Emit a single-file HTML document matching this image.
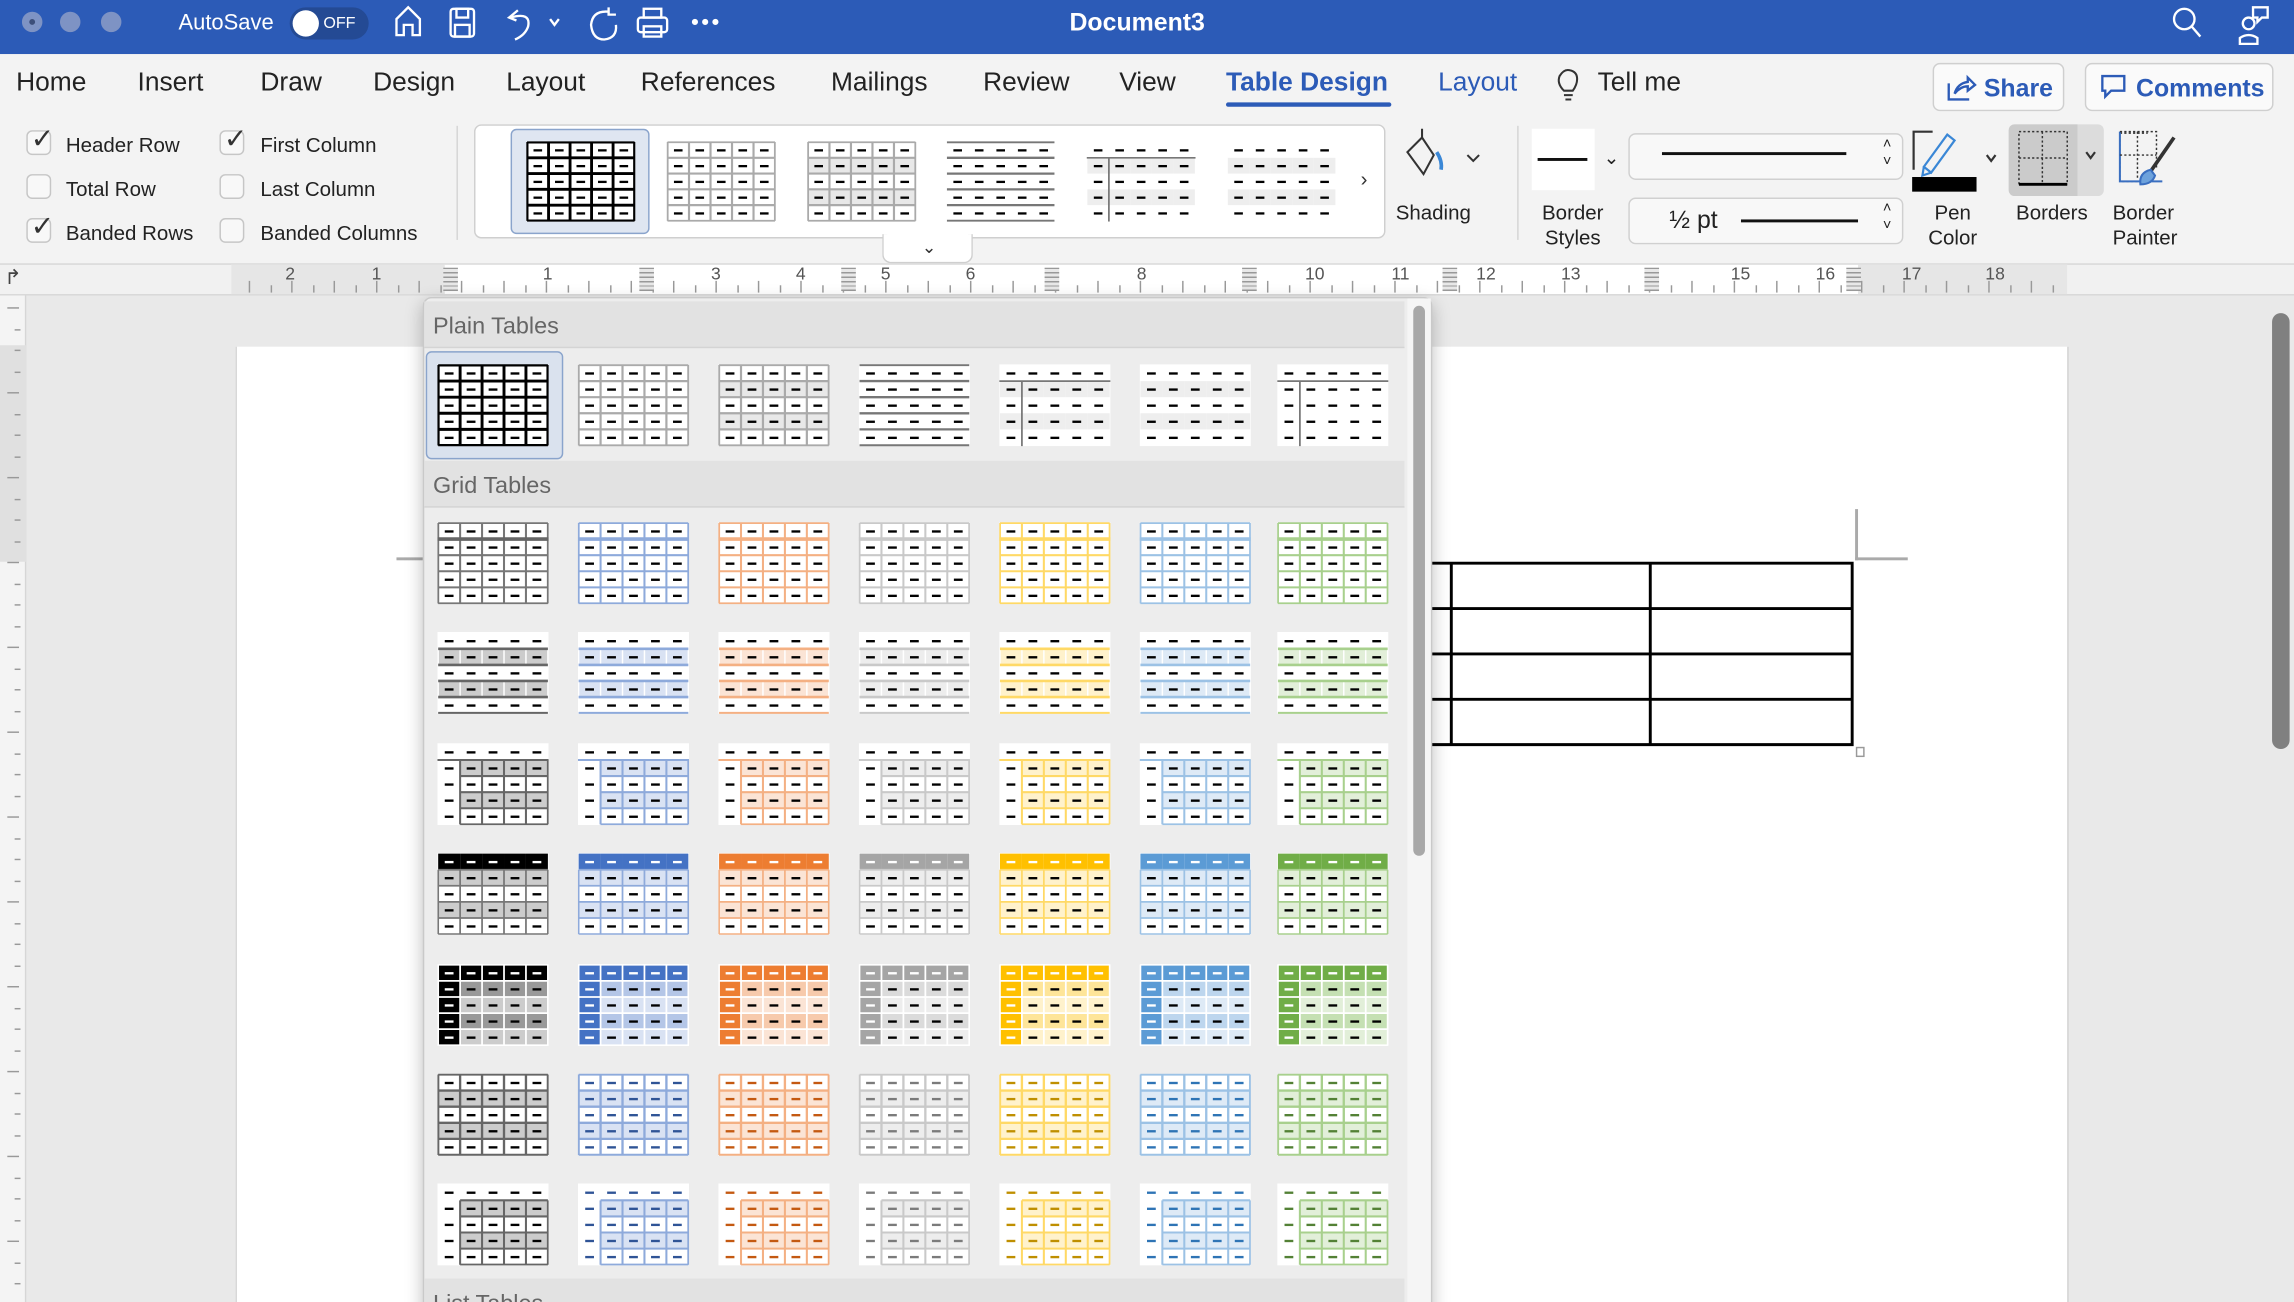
<!DOCTYPE html>
<html><head><meta charset="utf-8">
<style>
*{margin:0;padding:0;box-sizing:border-box}
html,body{width:2294px;height:1302px;overflow:hidden;background:#e8e8e8}
#root{position:absolute;left:0;top:0;width:1568px;height:890px;transform:scale(1.46301,1.46292);transform-origin:0 0;font-family:"Liberation Sans",sans-serif;color:#222;overflow:hidden}
.a{position:absolute}
.title{left:0;top:0;width:1568px;height:37px;background:#2c5bb7}
.tab{position:absolute;top:46px;font-size:18px;color:#222}
.lbl{position:absolute;font-size:14px;color:#222}
.cb{position:absolute;width:17px;height:17px;border:1px solid #c6c6c6;border-radius:4px;background:#f8f8f8}
.ck{position:absolute;left:2px;top:-6px;font-size:19px;color:#333}
.th{position:absolute}
.hdr{position:absolute;left:1px;width:670px;height:32px;background:#e2e2e2;border-bottom:1px solid #d4d4d4;font-size:16px;color:#666;padding:9px 0 0 6px}
.btn{position:absolute;border:1px solid #cfcfcf;border-radius:5px;background:#fafafa;font-size:17px;color:#2c5bb7;font-weight:bold}
</style></head><body><div id="root">

<!-- title bar -->
<div class="a title"></div>
<div class="a" style="left:15px;top:8px;width:14px;height:14px;border-radius:7px;background:#7e93c4"></div>
<div class="a" style="left:20px;top:13px;width:4px;height:4px;border-radius:2px;background:#3d4f7a"></div>
<div class="a" style="left:41px;top:8px;width:14px;height:14px;border-radius:7px;background:#7e93c4"></div>
<div class="a" style="left:69px;top:8px;width:14px;height:14px;border-radius:7px;background:#7e93c4"></div>
<div class="a" style="left:122px;top:7px;font-size:15px;color:#fff;">AutoSave</div>
<div class="a" style="left:198px;top:5px;width:54px;height:22px;border-radius:11px;background:#244a94"></div>
<div class="a" style="left:200px;top:7px;width:18px;height:18px;border-radius:9px;background:#fff"></div>
<div class="a" style="left:221px;top:10px;font-size:11px;color:#fff">OFF</div>
<svg class="a" style="left:260px;top:0" width="250" height="37" fill="none" stroke="#fff" stroke-width="1.6">
<path d="M11 24V13L19 5L27 13V24H22V17H16V24Z"/>
<rect x="48" y="6" width="16" height="19" rx="2"/><rect x="52" y="6" width="8" height="6"/><rect x="51" y="17" width="10" height="8"/>
<path d="M94 7L88 12L93 14M89 12Q103 8 101 18Q99 24 92 27"/><path d="M116 13L119 17L122 13"/>
<path d="M156 8Q145 7 144 17Q145 27 153 27Q162 26 161 17M156 5V10H161"/>
<rect x="176" y="12" width="20" height="10" rx="2"/><rect x="180" y="6" width="12" height="6"/><rect x="180" y="18" width="12" height="7"/>
<circle cx="215" cy="15" r="1.3" fill="#fff"/><circle cx="222" cy="15" r="1.3" fill="#fff"/><circle cx="229" cy="15" r="1.3" fill="#fff"/>
</svg>
<div class="a" style="left:731px;top:6px;font-size:17px;font-weight:bold;color:#fff">Document3</div>
<svg class="a" style="left:1480px;top:0" width="88" height="37" fill="none" stroke="#fff" stroke-width="1.6">
<circle cx="13" cy="13" r="7"/><path d="M18 18L24 25"/>
<circle cx="57" cy="16" r="4"/><path d="M51 30V26Q57 22 63 26V30Z"/><path d="M60 5H70V12H66L63 15V12H60Z"/>
</svg>

<!-- tab row -->
<div class="a" style="left:0;top:37px;width:1568px;height:143px;background:#f3f3f3"></div>
<div class="tab" style="left:11px">Home</div>
<div class="tab" style="left:94px">Insert</div>
<div class="tab" style="left:178px">Draw</div>
<div class="tab" style="left:255px">Design</div>
<div class="tab" style="left:346px">Layout</div>
<div class="tab" style="left:438px">References</div>
<div class="tab" style="left:568px">Mailings</div>
<div class="tab" style="left:672px">Review</div>
<div class="tab" style="left:765px">View</div>
<div class="tab" style="left:838px;color:#2c5bb7;font-weight:bold">Table Design</div>
<div class="a" style="left:838px;top:70px;width:113px;height:3px;background:#2c5bb7;border-radius:2px"></div>
<div class="tab" style="left:983px;color:#2c5bb7">Layout</div>
<svg class="a" style="left:1062px;top:46px" width="20" height="24" fill="none" stroke="#333" stroke-width="1.4"><path d="M7 16Q2 11 4 6Q7 1 11 2Q16 3 16 8Q16 12 13 16ZM7 19H13M8 22H12"/></svg>
<div class="tab" style="left:1092px">Tell me</div>
<div class="btn" style="left:1321px;top:43px;width:90px;height:33px;padding:7px 0 0 34px">Share</div>
<svg class="a" style="left:1330px;top:50px" width="22" height="20" fill="none" stroke="#2c5bb7" stroke-width="1.6"><path d="M2 7V18H16M6 14Q8 7 15 6V3L20 8L15 12V9Q10 9 6 14Z"/></svg>
<div class="btn" style="left:1425px;top:43px;width:129px;height:33px;padding:7px 0 0 34px">Comments</div>
<svg class="a" style="left:1435px;top:50px" width="20" height="20" fill="none" stroke="#2c5bb7" stroke-width="1.6"><path d="M2 2H17V12H8L4 16V12H2Z"/></svg>

<!-- checkboxes -->
<div class="cb" style="left:18px;top:89px"><span class="ck">✓</span></div><div class="lbl" style="left:45px;top:91px">Header Row</div>
<div class="cb" style="left:18px;top:119px"></div><div class="lbl" style="left:45px;top:121px">Total Row</div>
<div class="cb" style="left:18px;top:149px"><span class="ck">✓</span></div><div class="lbl" style="left:45px;top:151px">Banded Rows</div>
<div class="cb" style="left:150px;top:89px"><span class="ck">✓</span></div><div class="lbl" style="left:178px;top:91px">First Column</div>
<div class="cb" style="left:150px;top:119px"></div><div class="lbl" style="left:178px;top:121px">Last Column</div>
<div class="cb" style="left:150px;top:149px"></div><div class="lbl" style="left:178px;top:151px">Banded Columns</div>
<div class="a" style="left:312px;top:86px;width:1px;height:78px;background:#d5d5d5"></div>

<!-- gallery -->
<div class="a" style="left:324px;top:85px;width:623px;height:78px;background:#fff;border:1px solid #cfcfcf;border-radius:5px"></div>
<div class="a" style="left:603px;top:160px;width:62px;height:20px;background:#fff;border:1px solid #cfcfcf;border-top:none;border-radius:0 0 6px 6px"></div>
<div class="a" style="left:630px;top:162px;font-size:12px;color:#333">⌄</div>
<div class="a" style="left:349px;top:88px;width:95px;height:72px;background:#dfe6f1;border:1px solid #8aa4cc;border-radius:4px"></div>
<div id="gal"></div>
<div class="a" style="left:930px;top:114px;font-size:14px;color:#333">›</div>
<svg class="a" style="left:958px;top:86px" width="60" height="50" fill="none" stroke="#333" stroke-width="1.4"><path d="M4 18L14 8L22 20L15 33Z"/><path d="M14 8V2" /><path d="M24 18Q28 24 27 30" stroke="#3a87d6" stroke-width="2.5"/><path d="M45 20L49 24L53 20" /></svg>
<div class="lbl" style="left:954px;top:137px">Shading</div>
<div class="a" style="left:1037px;top:86px;width:1px;height:78px;background:#d5d5d5"></div>
<div class="a" style="left:1047px;top:88px;width:43px;height:42px;background:#fff"></div>
<div class="a" style="left:1051px;top:108px;width:34px;height:2px;background:#111"></div>
<div class="a" style="left:1096px;top:100px;font-size:13px">⌄</div>
<div class="lbl" style="left:1054px;top:137px;text-align:center;line-height:17px">Border<br>Styles</div>
<div class="a" style="left:1113px;top:91px;width:188px;height:32px;border:1px solid #d0d0d0;border-radius:5px;background:#f8f8f8"></div>
<div class="a" style="left:1136px;top:104px;width:126px;height:2px;background:#111"></div>
<div class="a" style="left:1113px;top:135px;width:188px;height:32px;border:1px solid #d0d0d0;border-radius:5px;background:#f8f8f8"></div>
<div class="a" style="left:1141px;top:141px;font-size:17px">½ pt</div>
<div class="a" style="left:1190px;top:150px;width:80px;height:2px;background:#111"></div>
<div class="a" style="left:1287px;top:93px;font-size:10px;line-height:12px">˄<br>˅</div>
<div class="a" style="left:1287px;top:137px;font-size:10px;line-height:12px">˄<br>˅</div>
<svg class="a" style="left:1305px;top:86px" width="70" height="46" fill="none" stroke-width="1.5"><path d="M3 30V4H16" stroke="#333"/><path d="M10 28L26 6L31 10L15 32Z" stroke="#3a87d6"/><path d="M10 28L9 34L15 32" stroke="#3a87d6"/><path d="M53 20L56 24L59 20" stroke="#333"/></svg>
<div class="a" style="left:1307px;top:121px;width:44px;height:10px;background:#000"></div>
<div class="lbl" style="left:1318px;top:137px;text-align:center;line-height:17px">Pen<br>Color</div>
<div class="a" style="left:1373px;top:85px;width:65px;height:49px;background:#dcdcdc;border-radius:4px"></div>
<div class="a" style="left:1373px;top:85px;width:47px;height:49px;background:#cbcbcb;border-radius:4px 0 0 4px"></div>
<svg class="a" style="left:1378px;top:88px" width="90" height="46" fill="none" stroke-width="1"><rect x="2" y="2" width="33" height="36" stroke="#333" stroke-dasharray="1.5 1.5"/><path d="M18 2V38M2 20H35" stroke="#333" stroke-dasharray="1.5 1.5"/><path d="M2 38H35" stroke="#000" stroke-width="2"/><path d="M48 16L51 20L54 16" stroke="#333" stroke-width="1.5"/><rect x="71" y="3" width="30" height="33" stroke="#333" stroke-dasharray="1.5 1.5"/></svg>
<div class="lbl" style="left:1378px;top:137px">Borders</div>
<svg class="a" style="left:1446px;top:88px" width="50" height="46" fill="none" stroke-width="1.4"><path d="M3 2V36H32" stroke="#3a6fc0"/><path d="M3 2H28V28M15 2V34M3 18H28" stroke="#333" stroke-dasharray="1.5 1.5" stroke-width="1"/><path d="M40 6L22 32" stroke="#333" stroke-width="2.5"/><path d="M24 28Q16 30 17 38Q25 38 27 32Z" fill="#6da2dc" stroke="#3a6fc0"/></svg>
<div class="lbl" style="left:1444px;top:137px;line-height:17px">Border<br>Painter</div>

<!-- ruler -->
<div class="a" style="left:0;top:180px;width:1568px;height:22px;background:#f1f1f1;border-top:1px solid #d8d8d8;border-bottom:1px solid #d8d8d8"></div>
<div class="a" style="left:158px;top:181px;width:1255px;height:20px;background:#fff"></div>
<div class="a" style="left:158px;top:181px;width:146px;height:20px;background:#e6e6e6"></div>
<div class="a" style="left:1270px;top:181px;width:143px;height:20px;background:#e6e6e6"></div>
<div id="ruler"></div>
<div class="a" style="left:3px;top:181px;font-size:14px;color:#444">↱</div>

<!-- document area -->
<div class="a" style="left:0;top:202px;width:1568px;height:688px;background:#e9e9e9"></div>
<div class="a" style="left:0;top:202px;width:18px;height:688px;background:#f4f4f4;border-right:1px solid #d6d6d6"></div>
<div class="a" style="left:0;top:236px;width:18px;height:148px;background:#e0e0e0"></div>
<div id="vr"></div>
<div class="a" style="left:161px;top:237px;width:1253px;height:653px;background:#fff;border-left:1px solid #d8d8d8;border-right:1px solid #d0d0d0"></div>
<div class="a" style="left:1268px;top:348px;width:2px;height:35px;background:#aaa"></div>
<div class="a" style="left:1268px;top:381px;width:36px;height:2px;background:#aaa"></div>
<div class="a" style="left:271px;top:381px;width:18px;height:2px;background:#aaa"></div>
<svg class="a" style="left:975px;top:383px" width="300" height="140"><g stroke="#000" stroke-width="2" fill="none"><path d="M0 2H291V126H0M0 33H291M0 64H291M0 95H291M17 2V126M153 2V126"/></g><rect x="294" y="128" width="5" height="6" fill="#fff" stroke="#999"/></svg>
<div class="a" style="left:1553px;top:214px;width:12px;height:298px;background:#808080;border-radius:6px"></div>

<!-- dropdown -->
<div class="a" style="left:289px;top:203px;width:690px;height:700px;background:#ededed;border:1px solid #c9c9c9;border-radius:6px;box-shadow:0 4px 12px rgba(0,0,0,.25)"></div>
<div class="a" style="left:962px;top:204px;width:16px;height:686px;background:#f5f5f5"></div>
<div class="a" style="left:966px;top:209px;width:8px;height:376px;background:#a8a8a8;border-radius:4px"></div>
<div class="hdr" style="left:290px;top:206px">Plain Tables</div>
<div class="hdr" style="left:290px;top:315px">Grid Tables</div>
<div class="hdr" style="left:290px;top:874px">List Tables</div>
<div class="a" style="left:291px;top:240px;width:94px;height:74px;background:#dae2ee;border:1px solid #8aa4cc;border-radius:4px"></div>
<div id="dd"></div>
</div>
<script>
var dark=['#000','#4472c4','#ed7d31','#a5a5a5','#ffc000','#5b9bd5','#70ad47'];
var med=['#6e6e6e','#8eaadb','#f4b083','#c9c9c9','#ffd966','#9cc2e5','#a8d08d'];
var lite=['#cccccc','#d9e2f3','#fbe4d5','#ededed','#fff2cc','#deeaf6','#e2efd9'];
var mid=['#999','#b4c6e7','#f7caac','#dbdbdb','#fee599','#bdd6ee','#c5e0b3'];
var txt=['#000','#2f5496','#c45911','#7b7b7b','#bf8f00','#2e74b5','#538135'];
var W=76,H=56,cw=15,ch=11,x0=0.5,y0=0.5;
function build(o){
 var s='<svg width="'+W+'" height="'+H+'" viewBox="0 0 '+W+' '+H+'" xmlns="http://www.w3.org/2000/svg"><rect width="'+W+'" height="'+H+'" fill="#fff"/>';
 for(var r=0;r<5;r++)for(var c=0;c<5;c++){var f=o.fill?o.fill(r,c):null;if(f)s+='<rect x="'+(x0+c*cw)+'" y="'+(y0+r*ch)+'" width="'+cw+'" height="'+ch+'" fill="'+f+'"/>';}
 (o.lines||[]).forEach(function(l){s+='<line x1="'+l[0]+'" y1="'+l[1]+'" x2="'+l[2]+'" y2="'+l[3]+'" stroke="'+l[4]+'" stroke-width="'+(l[5]||1)+'"/>';});
 for(var r=0;r<5;r++)for(var c=0;c<5;c++){var d=o.dash?o.dash(r,c):'#000';s+='<rect x="'+(x0+c*cw+4.5)+'" y="'+(y0+r*ch+5)+'" width="6" height="1.6" fill="'+d+'"/>';}
 return s+'</svg>';
}
function grid(col,w,opt){opt=opt||{};var L=[];var r0=opt.skipRow?1:0,c0=opt.skipCol?1:0;
 var xs=x0+c0*cw,ys=y0+r0*ch,xe=x0+5*cw,ye=y0+5*ch;
 if(!opt.noH)for(var r=r0;r<=5;r++)L.push([xs,y0+r*ch,xe,y0+r*ch,col,w]);
 if(!opt.noV)for(var c=c0;c<=5;c++)L.push([x0+c*cw,ys,x0+c*cw,ye,col,w]);
 return L;}
var plain=[
 {lines:grid('#000',2)},
 {lines:grid('#aaa',1.5)},
 {lines:grid('#aaa',1.5),fill:function(r){return r%2?'#e8e8e8':null}},
 {lines:grid('#777',1.6,{noV:1})},
 {lines:[[0,11.5,76,11.5,'#777',1.2],[15.5,11.5,15.5,56,'#777',1.2]],fill:function(r){return r%2?'#eee':null}},
 {fill:function(r){return r%2?'#eee':null}},
 {lines:[[0,11.5,76,11.5,'#777',1.2],[15.5,11.5,15.5,56,'#777',1.2]]}
];
function gridStyles(i){
 var m=med[i],dk=dark[i],lt=lite[i],md=mid[i];
 var A={lines:grid(i==0?'#777':m,1.4).concat([[0,11.5,76,11.5,i==0?'#666':m,2.5]])};
 var B={fill:function(r){return (r==1||r==3)?lt:null},lines:grid('#fff',1,{noH:1,skipRow:1}).concat(grid(i==0?'#666':m,1.8,{noV:1,skipRow:1}))};
 var C={fill:function(r,c){return (r==1||r==3)&&c>0?lt:null},lines:grid(i==0?'#666':m,1.4,{skipRow:1,skipCol:1}).concat([[0,11.5,76,11.5,i==0?'#666':m,1.4]])};
 var D={fill:function(r){return r==0?dk:(r%2?lt:null)},lines:grid(i==0?'#777':m,1.2,{skipRow:1}),dash:function(r){return r==0?'#fff':'#000'}};
 var E={fill:function(r,c){return (r==0||c==0)?dk:(r%2?md:lt)},lines:grid('#fff',1.2),dash:function(r,c){return (r==0||c==0)?'#fff':'#000'}};
 var F={fill:function(r){return (r==1||r==3)?lt:null},lines:grid(i==0?'#666':m,1.6),dash:function(){return txt[i]}};
 var G={fill:function(r,c){return (r==1||r==3)&&c>0?lt:null},lines:grid(i==0?'#666':m,1.4,{skipRow:1,skipCol:1}),dash:function(){return txt[i]}};
 return [A,B,C,D,E,F,G];
}
var dd='';var xs=[299,395,491,587,683,779,873];
for(var k=0;k<7;k++)dd+='<div class="th" style="left:'+xs[k]+'px;top:249px">'+build(plain[k])+'</div>';
var rows=[357,432,508,583,659,734,809];
for(var i=0;i<7;i++){var g=gridStyles(i);for(var r=0;r<7;r++)dd+='<div class="th" style="left:'+xs[i]+'px;top:'+rows[r]+'px">'+build(g[r])+'</div>';}
document.getElementById('dd').innerHTML=dd;
var gl='';var gx=[359,455,551,646,742,838];
for(var k=0;k<6;k++)gl+='<div class="th" style="left:'+gx[k]+'px;top:96px;transform:scale(0.98,0.98)">'+build(plain[k])+'</div>';
document.getElementById('gal').innerHTML=gl;
var ru='';var nums=[[200,'2'],[259,'1'],[376,'1'],[491,'3'],[549,'4'],[607,'5'],[665,'6'],[782,'8'],[897,'10'],[956,'11'],[1014,'12'],[1072,'13'],[1188,'15'],[1246,'16'],[1305,'17'],[1362,'18']];
nums.forEach(function(n){ru+='<div class="a" style="left:'+(n[0]-5)+'px;top:180px;font-size:12px;color:#555">'+n[1]+'</div>';});
for(var x=170;x<1410;x+=14.5)ru+='<div class="a" style="left:'+x+'px;top:'+(Math.round((x-170)/14.5)%2?195:192)+'px;width:1px;height:'+(Math.round((x-170)/14.5)%2?5:8)+'px;background:#999"></div>';
[303,437,575,714,849,986,1124,1262].forEach(function(x){ru+='<div class="a" style="left:'+x+'px;top:183px;width:10px;height:16px;background:repeating-linear-gradient(#999 0 1px,#e8e8e8 1px 3px)"></div>';});
document.getElementById('ruler').innerHTML=ru;
var vr='';for(var y=210;y<890;y+=14.5)vr+='<div class="a" style="left:'+(Math.round((y-210)/14.5)%4?10:5)+'px;top:'+y+'px;width:'+(Math.round((y-210)/14.5)%4?4:8)+'px;height:1px;background:#999"></div>';
document.getElementById('vr').innerHTML=vr;
</script>
</body></html>
